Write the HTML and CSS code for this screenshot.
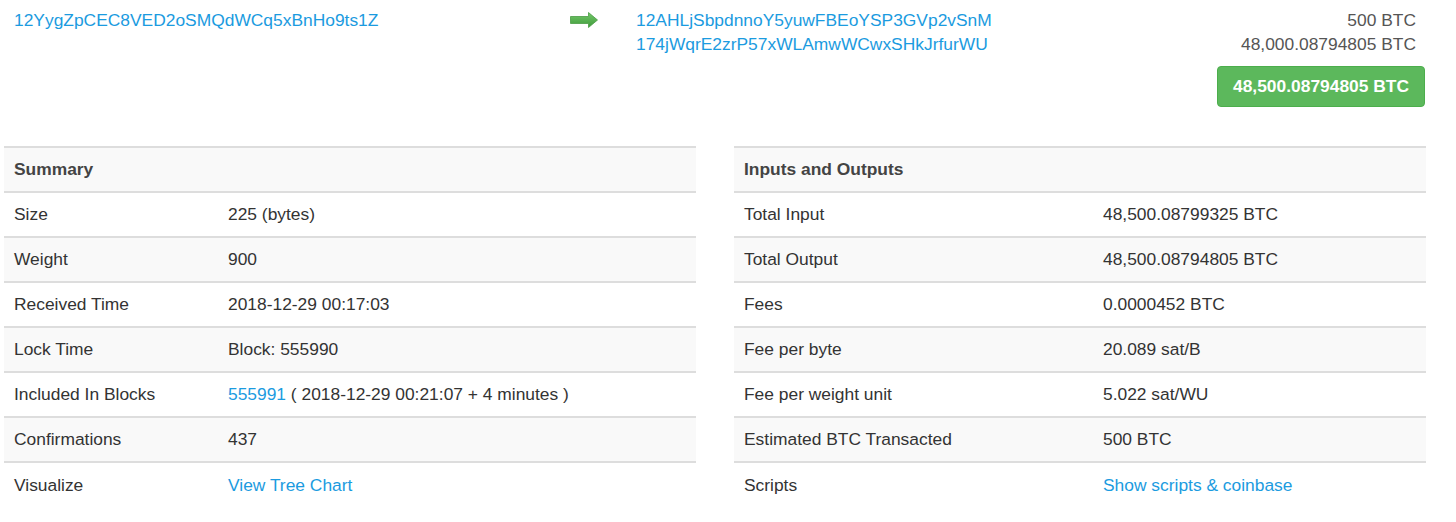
FILE: index.html
```html
<!DOCTYPE html>
<html>
<head>
<meta charset="utf-8">
<link rel="stylesheet" href="styles.css">
</head>
<body>
<div class="page">
  <div class="tx">
    <div class="tx-in"><a href="#">12YygZpCEC8VED2oSMQdWCq5xBnHo9ts1Z</a></div>
    <div class="tx-arrow">
      <svg width="28" height="16" viewBox="0 0 28 16">
        <defs>
          <linearGradient id="g" x1="0" y1="0" x2="0" y2="1">
            <stop offset="0" stop-color="#74c86a"/>
            <stop offset="1" stop-color="#3e9a3a"/>
          </linearGradient>
        </defs>
        <path d="M0.5 4.5 H18.5 V0.5 L27.5 8 L18.5 15.5 V11.5 H0.5 Z" fill="url(#g)" stroke="#4a9c44" stroke-width="0.8"/>
      </svg>
    </div>
    <div class="tx-out">
      <div class="out-row"><a href="#">12AHLjSbpdnnoY5yuwFBEoYSP3GVp2vSnM</a><span class="amt">500 BTC</span></div>
      <div class="out-row"><a href="#">174jWqrE2zrP57xWLAmwWCwxSHkJrfurWU</a><span class="amt">48,000.08794805 BTC</span></div>
      <div class="total"><button class="btn-total">48,500.08794805 BTC</button></div>
    </div>
  </div>

  <div class="tables">
    <table class="info">
      <colgroup><col class="c1l"><col></colgroup>
      <tr><th colspan="2">Summary</th></tr>
      <tr><td>Size</td><td>225 (bytes)</td></tr>
      <tr><td>Weight</td><td>900</td></tr>
      <tr><td>Received Time</td><td>2018-12-29 00:17:03</td></tr>
      <tr><td>Lock Time</td><td>Block: 555990</td></tr>
      <tr><td>Included In Blocks</td><td><a href="#">555991</a> ( 2018-12-29 00:21:07 + 4 minutes )</td></tr>
      <tr><td>Confirmations</td><td>437</td></tr>
      <tr><td>Visualize</td><td><a href="#">View Tree Chart</a></td></tr>
    </table>
    <table class="info">
      <colgroup><col class="c1r"><col></colgroup>
      <tr><th colspan="2">Inputs and Outputs</th></tr>
      <tr><td>Total Input</td><td>48,500.08799325 BTC</td></tr>
      <tr><td>Total Output</td><td>48,500.08794805 BTC</td></tr>
      <tr><td>Fees</td><td>0.0000452 BTC</td></tr>
      <tr><td>Fee per byte</td><td>20.089 sat/B</td></tr>
      <tr><td>Fee per weight unit</td><td>5.022 sat/WU</td></tr>
      <tr><td>Estimated BTC Transacted</td><td>500 BTC</td></tr>
      <tr><td>Scripts</td><td><a href="#">Show scripts &amp; coinbase</a></td></tr>
    </table>
  </div>
</div>
</body>
</html>
```

FILE: styles.css
```css
* { box-sizing: border-box; }
html, body { margin: 0; padding: 0; background: #fff; }
body {
  font-family: "Liberation Sans", Arial, Helvetica, sans-serif;
  font-size: 17.4px;
  color: #333;
}
a { color: #1b9be0; text-decoration: none; }
.page { padding: 8px 30px 0 4px; }

.tx { display: flex; align-items: flex-start; }
.tx-in { width: 556px; padding-left: 10px; line-height: 24px; }
.tx-arrow { width: 76px; padding-left: 10px; padding-top: 4px; }
.tx-arrow svg { display: block; }
.tx-out { flex: 1; padding-right: 10px; }
.out-row { display: flex; justify-content: space-between; line-height: 24px; }
.amt { color: #555; }
.total { display: flex; justify-content: flex-end; margin-top: 10px; margin-right: -9px; }
.btn-total {
  font-family: inherit;
  font-size: 17.4px;
  font-weight: bold;
  color: #fff;
  background: #5cb85c;
  border: 1px solid #4cae4c;
  border-radius: 4px;
  height: 41px;
  padding: 0 15px;
}

.tables {
  display: grid;
  grid-template-columns: 1fr 1fr;
  column-gap: 38px;
  margin-top: 39px;
}
.info { width: 100%; border-collapse: collapse; border-top: 2px solid #ddd; }
.info .c1l { width: 214px; }
.info .c1r { width: 359px; }
.info th, .info td {
  text-align: left;
  padding: 0 10px;
  height: 45px;
  vertical-align: middle;
}
.info th { font-weight: bold; color: #444; }
.info tr + tr td { border-top: 2px solid #ddd; }
.info tr:nth-child(odd) { background: #f9f9f9; }
```
